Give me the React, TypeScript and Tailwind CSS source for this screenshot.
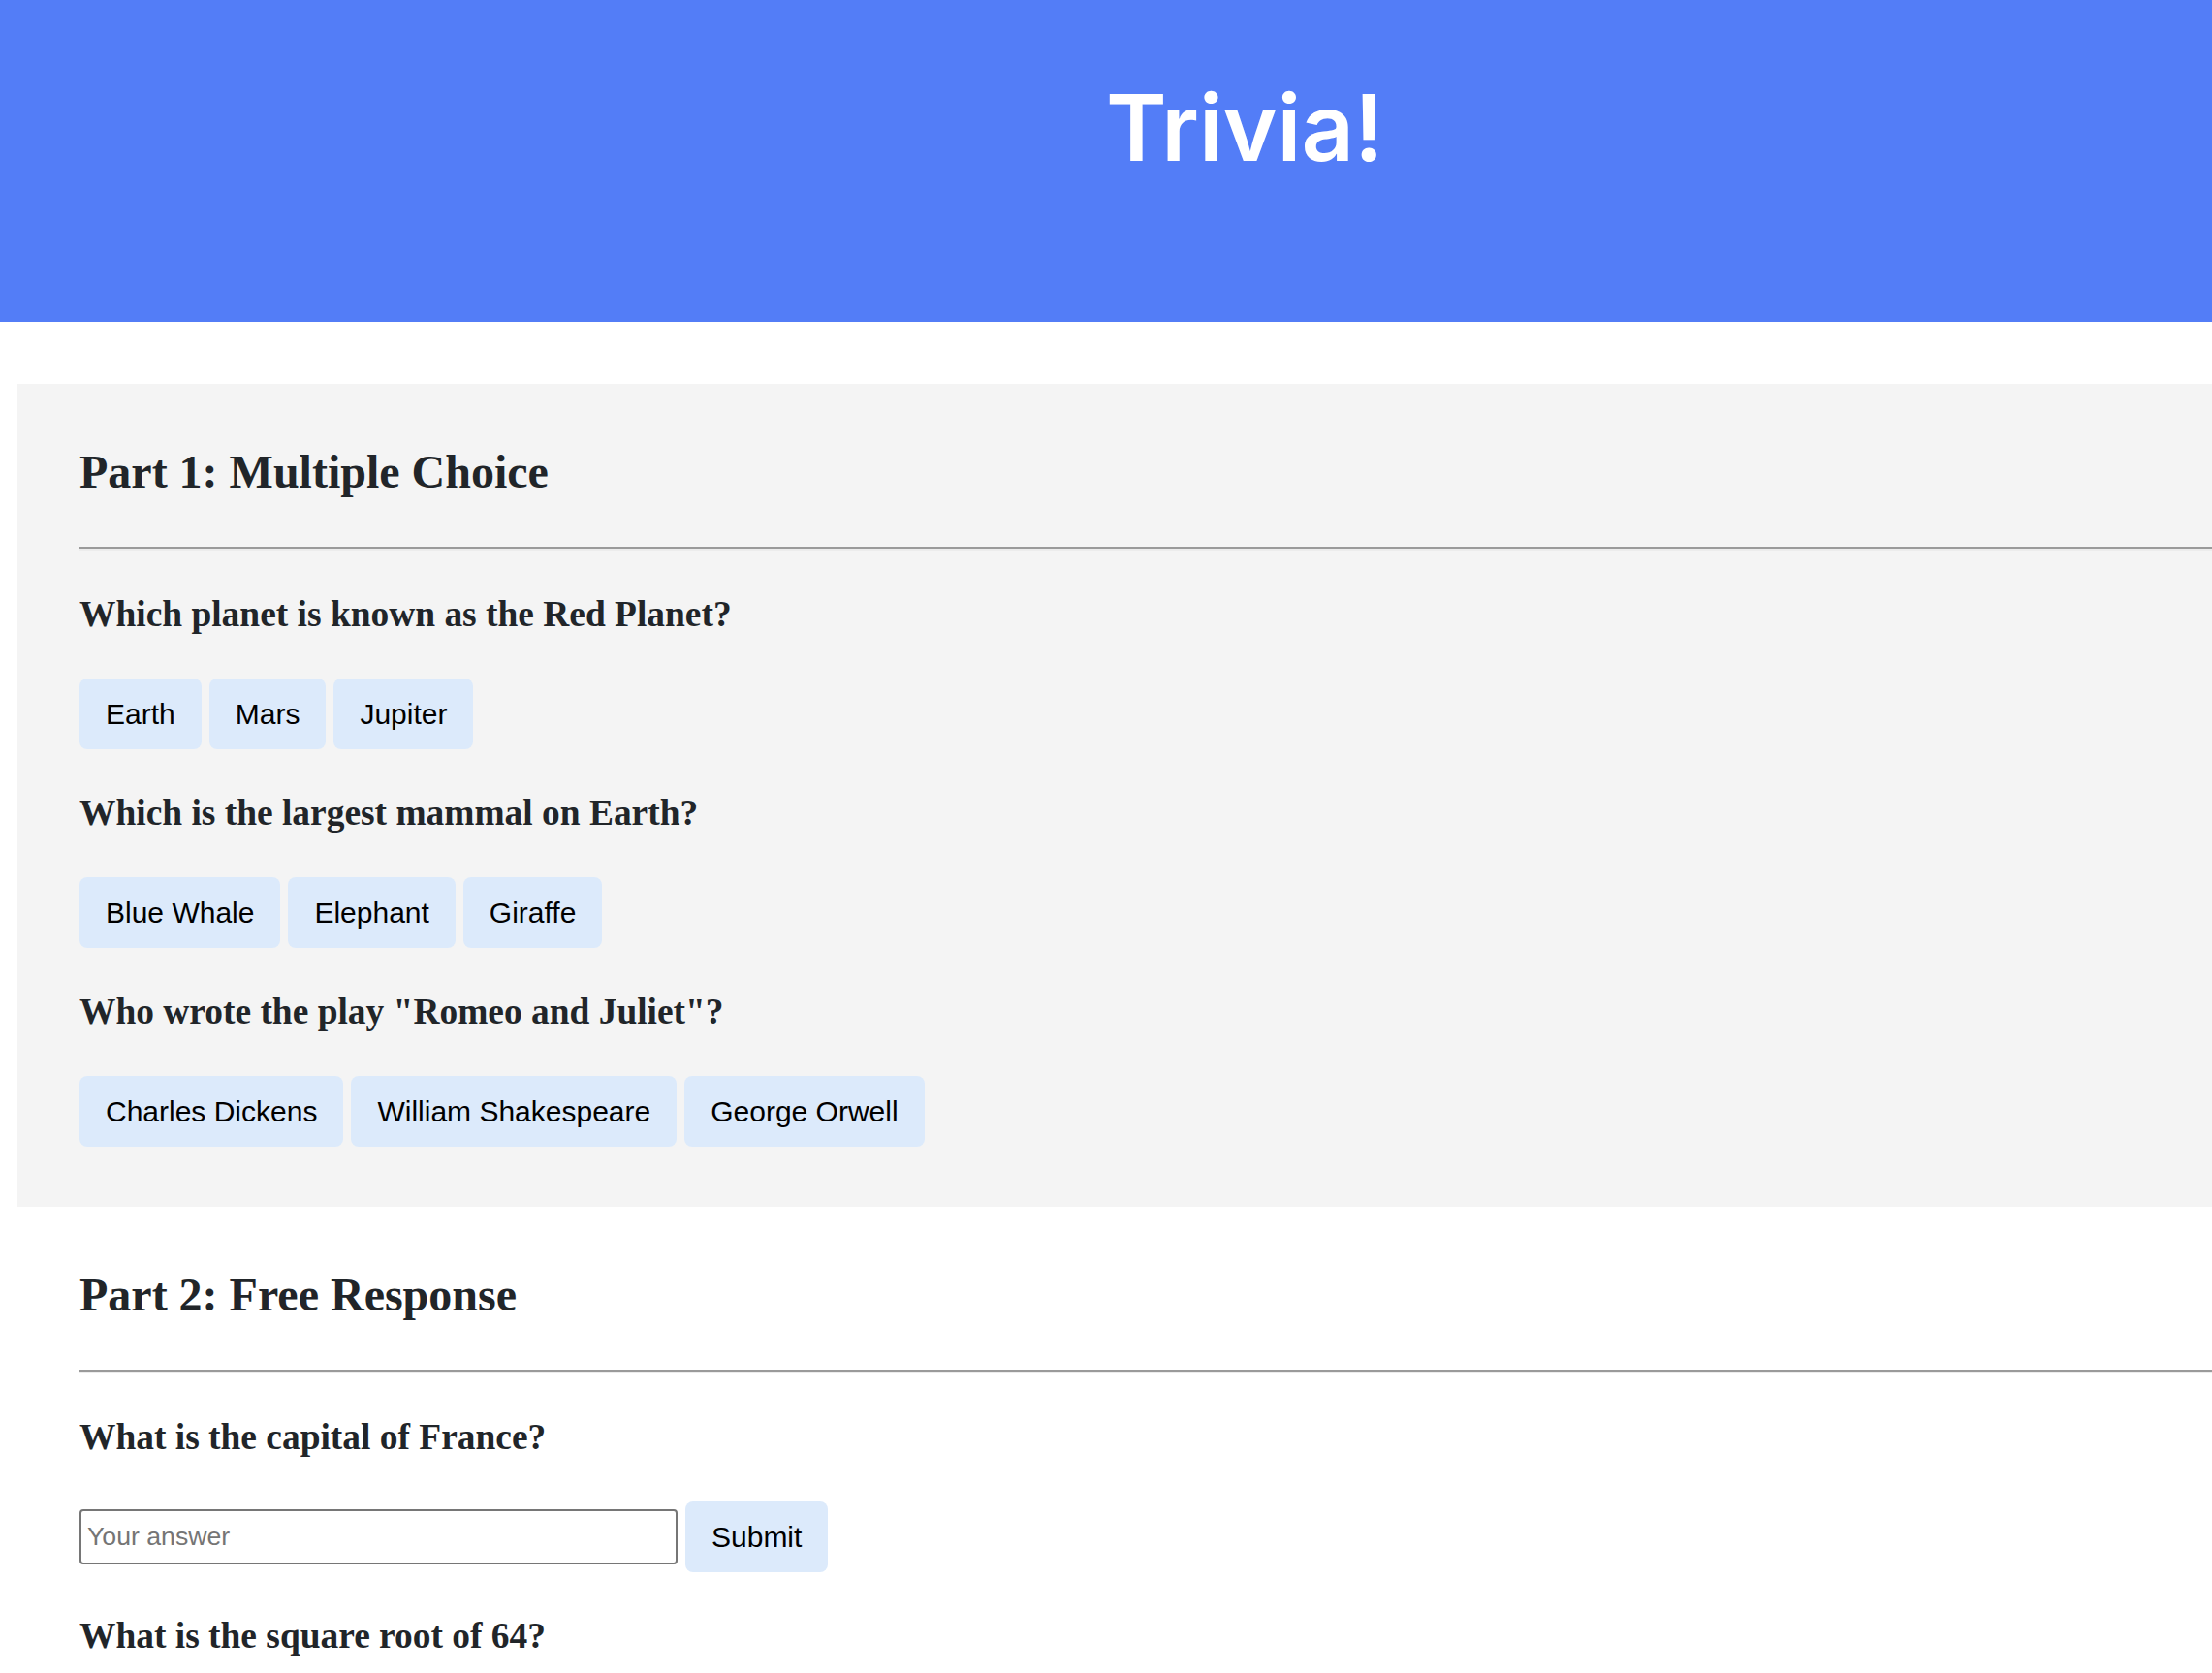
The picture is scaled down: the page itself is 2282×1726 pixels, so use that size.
import { useState } from "react";

type Question = { q: string; options: string[] };

const multipleChoice: Question[] = [
  { q: "Which planet is known as the Red Planet?", options: ["Earth", "Mars", "Jupiter"] },
  { q: "Which is the largest mammal on Earth?", options: ["Blue Whale", "Elephant", "Giraffe"] },
  { q: 'Who wrote the play "Romeo and Juliet"?', options: ["Charles Dickens", "William Shakespeare", "George Orwell"] },
];

const freeResponse = ["What is the capital of France?", "What is the square root of 64?"];

const serif = "font-['Liberation_Serif','Times_New_Roman',serif]";
const sans = "font-['Liberation_Sans',Arial,sans-serif]";

function ChoiceButton({ label, onClick }: { label: string; onClick?: () => void }) {
  return (
    <button
      onClick={onClick}
      className={`${sans} h-[73px] px-[27px] rounded-[8px] bg-[#dceafb] text-black text-[30px] leading-[34px]`}
    >
      {label}
    </button>
  );
}

function SectionTitle({ children }: { children: string }) {
  return (
    <>
      <h2 className={`${serif} text-[48px] leading-[53px] font-bold text-[#212529]`}>{children}</h2>
      <div className="mt-[51px] h-[2px] bg-[#9a9a9a]" />
      <div className="h-[2px] bg-[#ececec]" />
    </>
  );
}

function QuestionTitle({ children }: { children: string }) {
  return <h3 className={`${serif} mt-[44px] mb-[45px] text-[37.44px] leading-[43px] font-bold text-[#212529]`}>{children}</h3>;
}

export default function App() {
  const [answers, setAnswers] = useState<string[]>(["", ""]);

  return (
    <div className="w-full h-[1726px] overflow-hidden bg-white">
      <header className="h-[332px] bg-[#537df7] pl-[50%] pt-[84px]">
        <h1 className="font-['Inter',sans-serif] text-[95px] leading-none font-semibold text-white">
          Trivia!
        </h1>
      </header>

      <div className="h-[64px]" />

      <section className="ml-[18px] bg-[#f4f4f4] pl-[64px] pt-[64px] pb-[62px]">
        <SectionTitle>Part 1: Multiple Choice</SectionTitle>
        {multipleChoice.map((item) => (
          <div key={item.q}>
            <QuestionTitle>{item.q}</QuestionTitle>
            <div className="flex gap-2">
              {item.options.map((o) => (
                <ChoiceButton key={o} label={o} />
              ))}
            </div>
          </div>
        ))}
      </section>

      <section className="ml-[18px] pl-[64px] pt-[64px] pb-[64px]">
        <SectionTitle>Part 2: Free Response</SectionTitle>
        {freeResponse.map((q, i) => (
          <div key={q}>
            <QuestionTitle>{q}</QuestionTitle>
            <div className="flex items-center gap-2">
              <input
                value={answers[i]}
                onChange={(e) => {
                  const next = [...answers];
                  next[i] = e.target.value;
                  setAnswers(next);
                }}
                placeholder="Your answer"
                className={`${sans} w-[617px] h-[57px] px-[6px] border-2 border-[#767676] rounded-[4px] bg-white text-[26.67px] text-black placeholder:text-[#757575] outline-none`}
              />
              <ChoiceButton label="Submit" />
            </div>
          </div>
        ))}
      </section>
    </div>
  );
}
